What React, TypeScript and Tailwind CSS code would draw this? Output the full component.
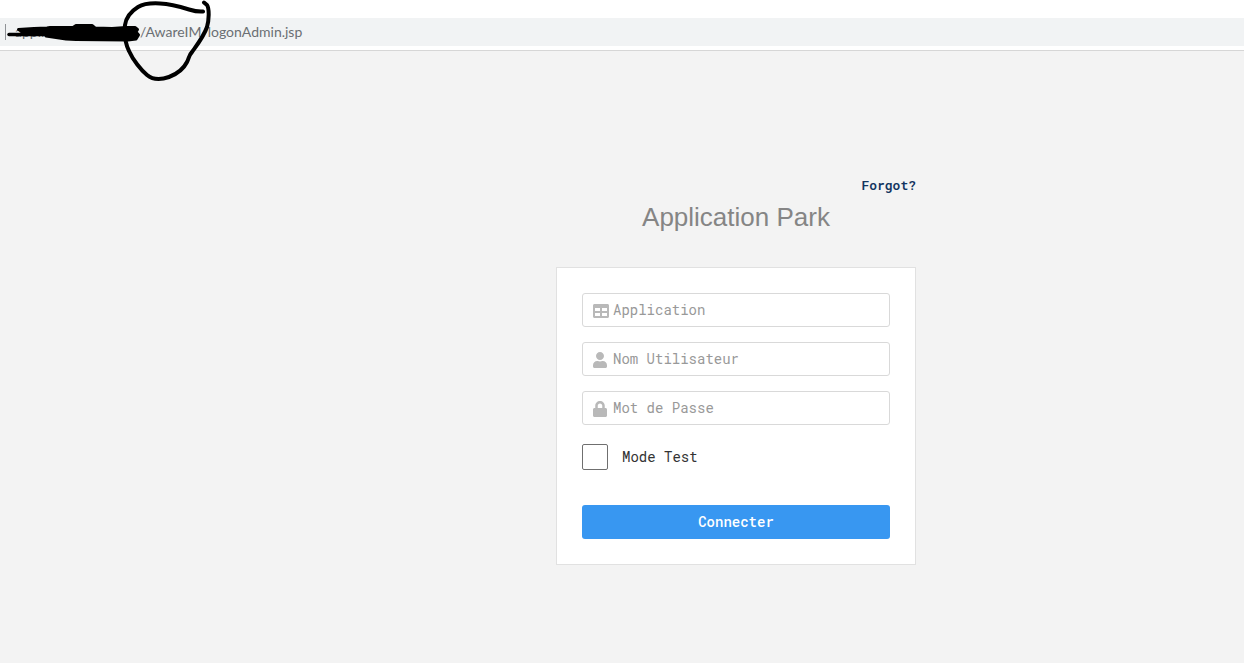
import React from 'react';
import { FaLock, FaTable, FaUser } from 'react-icons/fa';
import type { IconType } from 'react-icons';

interface LoginFieldProps {
  id: string;
  label: string;
  type?: string;
  icon: IconType;
  iconClass: string;
}

const LoginField: React.FC<LoginFieldProps> = ({ id, label, type = 'text', icon: Icon, iconClass }) => (
  <label
    htmlFor={id}
    className="flex h-[34px] items-center rounded-[3px] border border-[#d9d9d9] bg-white pl-[10px]"
  >
    <span className="w-5 shrink-0 pt-0.5">
      <Icon className={`h-4 text-[#b9b9b9] ${iconClass}`} aria-hidden="true" />
    </span>
    <input
      id={id}
      type={type}
      placeholder={label}
      aria-label={label}
      className="min-w-0 flex-1 bg-transparent text-sm text-[#333] outline-none placeholder:text-[#999]"
    />
  </label>
);

// Hand-drawn marker strokes over the address bar
const MarkerStrokes: React.FC = () => (
  <svg
    className="pointer-events-none absolute top-0 left-0"
    width="320"
    height="90"
    viewBox="0 0 320 90"
    fill="none"
    stroke="#000"
    strokeLinecap="round"
    strokeLinejoin="round"
    aria-hidden="true"
  >
    <path
      strokeWidth="4"
      d="M203 11.5 C198 12 194 11 189 9.5 C181 7 171 4 160 3.5 C151 3 143 4 138 7 C130 12 126 18 125 25 C124 36 125 43 129 51 C133 60 141 70 147 75 C153 80 162 79.500 169 77 C177 74 183 70 187 62 C189 58 189 55 192 52 C197 45 204 36 207 27 C209 20 209.500 9 207 5 L204 2.500"
    />
    <path strokeWidth="3.5" d="M9 34.500 L50 34.500" />
    <path
      fill="#000"
      strokeWidth="3"
      d="M18.500 29.500 L34 28.500 L47 28 L50 27.500 L73 27.500 L76 25.500 L92 25.500 L95 28 L112 28.500 L126 27.500 L135 27.500 L137.500 29.500 L136 32 L138.500 35 L136 39 L128 40 L76 39.500 L66 39 L56 37.500 L46 36 L46 34.500 L22 34 L22 31.500 Z"
    />
  </svg>
);

const AddressBar: React.FC = () => (
  <header className="relative border-b border-[#d6d6d6] bg-white pt-[18px] pb-1 font-[Lato,sans-serif] text-sm text-[#6b6f73]">
    <div className="flex h-7 items-center bg-[#f1f3f4] pl-[5px]">
      <span className="h-4 w-px bg-[#8f9296]" />
      <span className="w-[134px] shrink-0 pl-[9px]">appli</span>
      <input
        type="text"
        aria-label="Address"
        defaultValue="/AwareIM/logonAdmin.jsp"
        className="min-w-0 flex-1 bg-transparent outline-none"
      />
    </div>
    <MarkerStrokes />
  </header>
);

const App: React.FC = () => {
  return (
    <div className="flex min-h-screen flex-col bg-[#f3f3f3]">
      <AddressBar />

      <main className="flex flex-1 justify-center pt-31 pb-10 pl-57 font-['Roboto_Mono','Liberation_Mono',monospace]">
        <div className="w-[360px]">
          <div className="text-right">
            <a href="#forgot" className="block text-[13px] leading-5 font-semibold text-[#12355f]">
              Forgot?
            </a>
          </div>
          <h1 className="mt-1 text-center font-['Liberation_Sans',Arial,sans-serif] text-[26px] leading-9 text-[#858585]">
            Application Park
          </h1>

          <form
            className="mt-8 border border-[#e1e1e1] bg-white p-[25px]"
            onSubmit={(e) => e.preventDefault()}
          >
            <div className="flex flex-col gap-[15px]">
              <LoginField id="application" label="Application" icon={FaTable} iconClass="w-4" />
              <LoginField id="username" label="Nom Utilisateur" icon={FaUser} iconClass="w-[14px]" />
              <LoginField id="password" label="Mot de Passe" type="password" icon={FaLock} iconClass="w-[14px]" />
            </div>

            <div className="mt-[19px] flex items-center gap-[14px]">
              <input
                id="test-mode"
                type="checkbox"
                className="size-[26px] appearance-none rounded-[2px] border border-[#6f6f6f] bg-white checked:bg-[#3897f1]"
              />
              <label htmlFor="test-mode" className="text-sm text-[#333]">
                Mode Test
              </label>
            </div>

            <button
              type="submit"
              className="mt-[35px] h-[34px] w-full rounded-[3px] bg-[#3897f1] text-sm font-medium text-white"
            >
              Connecter
            </button>
          </form>
        </div>
      </main>
    </div>
  );
};

export default App;
